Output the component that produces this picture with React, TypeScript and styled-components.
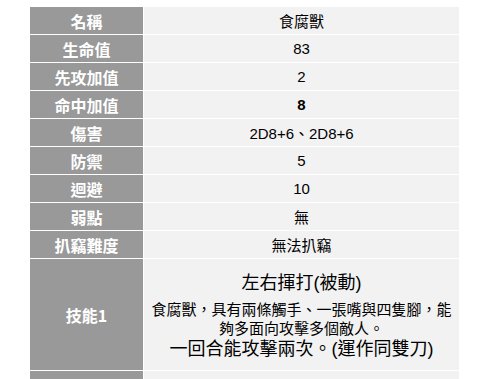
import { FC, Fragment } from "react";
import styled, { createGlobalStyle } from "styled-components";

const GlobalStyle = createGlobalStyle`
  html, body {
    margin: 0;
    padding: 0;
    background: #ffffff;
  }
  body {
    font-family: "Liberation Sans", "Noto Sans CJK TC", sans-serif;
  }
`;

const Page = styled.div`
  padding: 7px 0 0 30px;
  height: 379px;
  overflow: hidden;
  box-sizing: border-box;
`;

const Table = styled.div`
  display: grid;
  grid-template-columns: 113px 315px;
  column-gap: 1px;
  row-gap: 1px;
  width: 429px;
`;

const Label = styled.div<{ $tall?: boolean }>`
  background: #999999;
  color: #ffffff;
  height: ${({ $tall }) => ($tall ? "111px" : "27px")};
  display: flex;
  align-items: center;
  justify-content: center;
  font-family: "Noto Sans CJK TC", "Liberation Sans", sans-serif;
  font-weight: 700;
  font-size: 16px;
`;

const Value = styled.div<{ $bold?: boolean }>`
  background: #f2f2f2;
  color: #000000;
  height: 27px;
  display: flex;
  align-items: center;
  justify-content: center;
  font-size: 15px;
  font-weight: ${({ $bold }) => ($bold ? 700 : 400)};
`;

const SkillCell = styled.div`
  background: #f2f2f2;
  color: #000000;
  height: 111px;
  display: flex;
  flex-direction: column;
  align-items: center;
  justify-content: center;
  text-align: center;
  padding: 2px 6px 0;
  box-sizing: border-box;
`;

const SkillTitle = styled.div`
  font-size: 18px;
  line-height: 24px;
  margin-bottom: 5px;
`;

const SkillDesc = styled.div`
  font-size: 15px;
  line-height: 19px;
`;

const SkillNote = styled.div`
  font-size: 18px;
  line-height: 23px;
`;

const rows: { label: string; value: string; bold?: boolean }[] = [
  { label: "名稱", value: "食腐獸" },
  { label: "生命值", value: "83" },
  { label: "先攻加值", value: "2" },
  { label: "命中加值", value: "8", bold: true },
  { label: "傷害", value: "2D8+6、2D8+6" },
  { label: "防禦", value: "5" },
  { label: "迴避", value: "10" },
  { label: "弱點", value: "無" },
  { label: "扒竊難度", value: "無法扒竊" },
];

const App: FC = () => {
  return (
    <Page>
      <GlobalStyle />
      <Table>
        {rows.map((row) => (
          <Fragment key={row.label}>
            <Label>{row.label}</Label>
            <Value $bold={row.bold}>{row.value}</Value>
          </Fragment>
        ))}
        <Label $tall>技能1</Label>
        <SkillCell>
          <SkillTitle>左右揮打(被動)</SkillTitle>
          <SkillDesc>食腐獸，具有兩條觸手、一張嘴與四隻腳，能夠多面向攻擊多個敵人。</SkillDesc>
          <SkillNote>一回合能攻擊兩次。(運作同雙刀)</SkillNote>
        </SkillCell>
        <Label />
        <Value />
      </Table>
    </Page>
  );
};

export default App;
